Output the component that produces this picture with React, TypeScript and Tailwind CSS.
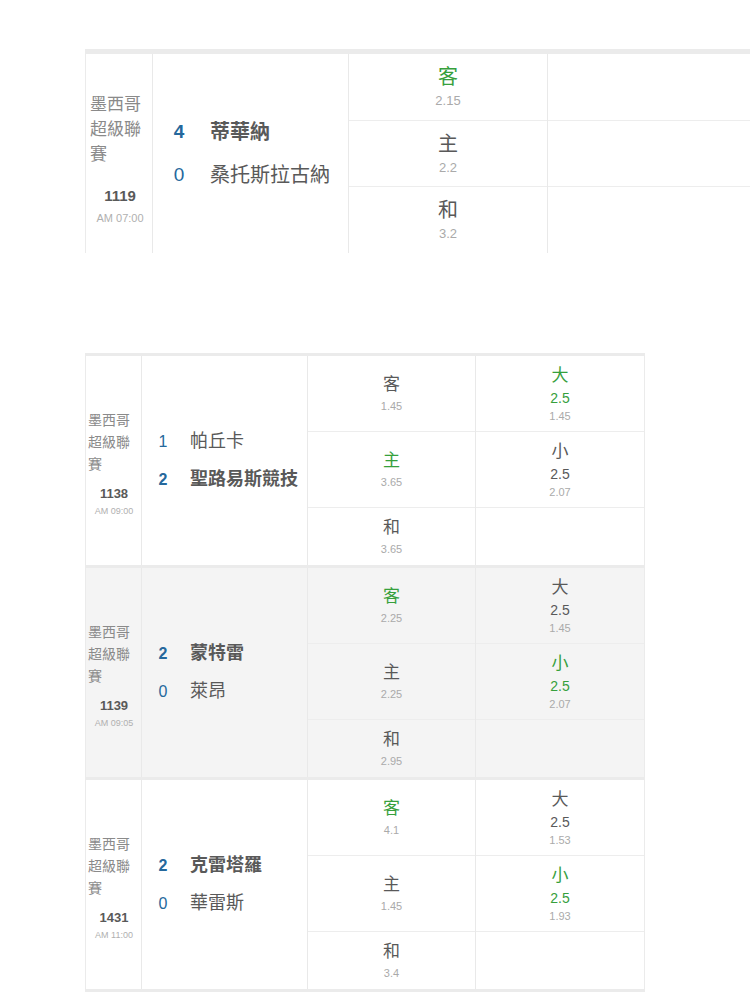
import React from "react";

type Team = { score: number; name: string; win?: boolean };
type Odd = { label: string; value: string; on?: boolean };
type OU = { label: string; line: string; value: string; on?: boolean };
type Match = {
  no: string;
  time: string;
  teams: Team[];
  odds: Odd[];
  ou: (OU | null)[];
  gray?: boolean;
};

const font = { fontFamily: '"Liberation Sans", "Noto Sans CJK TC", sans-serif' };

const big = {
  grid: "grid-cols-[67px_196px_199px_1fr]",
  rows: ["h-[67px] border-b", "h-[66px] border-b", "h-[66px]"],
  league: "justify-start pl-[4px] pr-[2px] text-[17px] leading-[25px] pt-[38px]",
  no: "mt-[19px] text-[15px] leading-[20px]",
  time: "mt-[4px] text-[11px] leading-[16px]",
  teamRow: "h-[43px]",
  score: "ml-[13px] w-[26px] text-[19px]",
  name: "ml-[18px] text-[20px]",
  oddLabel: "text-[20px] leading-[28px]",
  oddValue: "text-[13px] leading-[20px]",
  ouLabel: "text-[20px] leading-[28px]",
  ouLine: "text-[16px] leading-[22px]",
  ouValue: "text-[13px] leading-[18px]",
};

const small = {
  grid: "grid-cols-[56px_166px_168px_1fr]",
  rows: ["h-[76px] border-b", "h-[76px] border-b", "h-[57px]"],
  league: "justify-center pl-[2px] pr-[1px] text-[14px] leading-[22px] pt-[6px]",
  no: "mt-[10px] text-[13px] leading-[18px]",
  time: "mt-[1px] text-[9px] leading-[14px]",
  teamRow: "h-[38px]",
  score: "ml-[10px] w-[22px] text-[16px]",
  name: "ml-[16px] text-[18px]",
  oddLabel: "text-[17px] leading-[24px]",
  oddValue: "text-[11px] leading-[18px]",
  ouLabel: "text-[17px] leading-[24px]",
  ouLine: "text-[14px] leading-[20px]",
  ouValue: "text-[11px] leading-[16px]",
};

function MatchBlock({ m, s, last }: { m: Match; s: typeof small; last?: boolean }) {
  return (
    <div
      className={`grid ${s.grid} ${m.gray ? "bg-[#f4f4f4]" : "bg-white"} ${
        last ? "border-b-[3px] border-[#ebebeb]" : ""
      }`}
    >
      {/* league / no / time */}
      <div className={`flex flex-col border-r border-[#e9e9e9] ${s.league}`}>
        <div className="text-[#8a8a8a]">墨西哥超級聯賽</div>
        <div className={`text-center font-bold text-[#595959] ${s.no}`}>{m.no}</div>
        <div className={`text-center text-[#b0b0b0] ${s.time}`}>{m.time}</div>
      </div>

      {/* teams */}
      <div className="flex flex-col justify-center border-r border-[#e9e9e9]">
        {m.teams.map((t) => (
          <div key={t.name} className={`flex items-center ${s.teamRow}`}>
            <span className={`text-center text-[#25689c] ${t.win ? "font-bold" : ""} ${s.score}`}>
              {t.score}
            </span>
            <span className={`text-[#595959] ${t.win ? "font-bold" : ""} ${s.name}`}>{t.name}</span>
          </div>
        ))}
      </div>

      {/* 1x2 */}
      <div className="flex flex-col border-r border-[#e9e9e9]">
        {m.odds.map((o, i) => (
          <div
            key={o.label}
            className={`flex flex-col items-center justify-center border-[#ededed] ${s.rows[i]}`}
          >
            <span className={`${o.on ? "text-[#36a03c]" : "text-[#595959]"} ${s.oddLabel}`}>{o.label}</span>
            <span className={`text-[#aaa] ${s.oddValue}`}>{o.value}</span>
          </div>
        ))}
      </div>

      {/* over / under */}
      <div className="flex flex-col">
        {[0, 1, 2].map((i) => {
          const u = m.ou[i];
          return (
            <div
              key={i}
              className={`flex flex-col items-center justify-center border-[#ededed] ${s.rows[i]}`}
            >
              {u && (
                <>
                  <span className={`${u.on ? "text-[#36a03c]" : "text-[#595959]"} ${s.ouLabel}`}>{u.label}</span>
                  <span className={`${u.on ? "text-[#36a03c]" : "text-[#595959]"} ${s.ouLine}`}>{u.line}</span>
                  <span className={`text-[#aaa] ${s.ouValue}`}>{u.value}</span>
                </>
              )}
            </div>
          );
        })}
      </div>
    </div>
  );
}

const top: Match = {
  no: "1119",
  time: "AM 07:00",
  teams: [
    { score: 4, name: "蒂華納", win: true },
    { score: 0, name: "桑托斯拉古納" },
  ],
  odds: [
    { label: "客", value: "2.15", on: true },
    { label: "主", value: "2.2" },
    { label: "和", value: "3.2" },
  ],
  ou: [null, null, null],
};

const list: Match[] = [
  {
    no: "1138",
    time: "AM 09:00",
    teams: [
      { score: 1, name: "帕丘卡" },
      { score: 2, name: "聖路易斯競技", win: true },
    ],
    odds: [
      { label: "客", value: "1.45" },
      { label: "主", value: "3.65", on: true },
      { label: "和", value: "3.65" },
    ],
    ou: [
      { label: "大", line: "2.5", value: "1.45", on: true },
      { label: "小", line: "2.5", value: "2.07" },
    ],
  },
  {
    no: "1139",
    time: "AM 09:05",
    gray: true,
    teams: [
      { score: 2, name: "蒙特雷", win: true },
      { score: 0, name: "萊昂" },
    ],
    odds: [
      { label: "客", value: "2.25", on: true },
      { label: "主", value: "2.25" },
      { label: "和", value: "2.95" },
    ],
    ou: [
      { label: "大", line: "2.5", value: "1.45" },
      { label: "小", line: "2.5", value: "2.07", on: true },
    ],
  },
  {
    no: "1431",
    time: "AM 11:00",
    teams: [
      { score: 2, name: "克雷塔羅", win: true },
      { score: 0, name: "華雷斯" },
    ],
    odds: [
      { label: "客", value: "4.1", on: true },
      { label: "主", value: "1.45" },
      { label: "和", value: "3.4" },
    ],
    ou: [
      { label: "大", line: "2.5", value: "1.53" },
      { label: "小", line: "2.5", value: "1.93", on: true },
    ],
  },
];

export default function App() {
  return (
    <div className="h-[1000px] w-[750px] overflow-hidden bg-white" style={font}>
      <div className="ml-[85px] mt-[49px] w-[700px] border-l border-t-[5px] border-[#ebebeb]">
        <MatchBlock m={top} s={big} />
      </div>

      <div className="ml-[85px] mt-[100px] w-[560px] border-x border-[#ebebeb]">
        {list.map((m, i) => (
          <div key={m.no} className="border-t-[3px] border-[#ebebeb]">
            <MatchBlock m={m} s={small} last={i === list.length - 1} />
          </div>
        ))}
      </div>
    </div>
  );
}
